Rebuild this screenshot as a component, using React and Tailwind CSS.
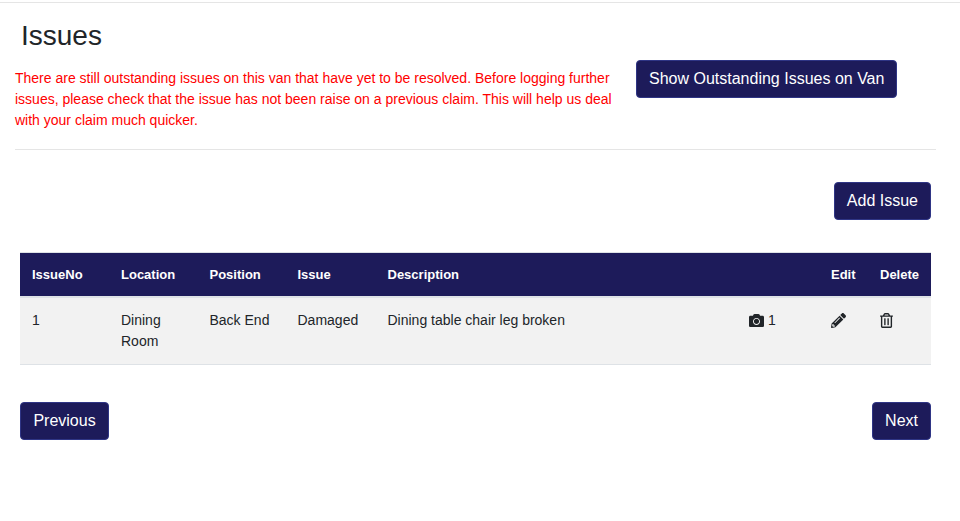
import { FaCamera, FaPencilAlt, FaRegTrashAlt } from 'react-icons/fa';

const NavButton = ({ children, className = '' }) => (
  <button className={`h-[38px] px-3 rounded border border-[#2f3585] bg-[#1d1b5a] text-white text-base leading-6 ${className}`}>
    {children}
  </button>
);

const headCell = 'px-3 pt-[3px] align-middle text-left text-[13px] font-bold';

const App = () => {
  return (
    <div className="min-h-[521px] bg-white text-[#212529] font-['Liberation_Sans',Arial,sans-serif]">
      <div className="h-[3px] border-b border-[#e5e5e5]" />

      <div className="px-[15px] w-[951px]">
        {/* Title + warning */}
        <h2 className="pl-[6px] pt-[16px] text-[28px] leading-[34px] font-normal">Issues</h2>

        <div className="flex items-start mt-[7px]">
          <p className="w-[621px] pt-[8px] text-sm leading-[21px] text-[#ff0000]">
            There are still outstanding issues on this van that have yet to be resolved. Before logging further
            issues, please check that the issue has not been raise on a previous claim. This will help us deal
            with your claim much quicker.
          </p>
          <NavButton>Show Outstanding Issues on Van</NavButton>
        </div>

        <hr className="mt-[18px] border-[#e5e5e5]" />

        <div className="flex justify-end mt-[32px] pr-[5px]">
          <NavButton>Add Issue</NavButton>
        </div>

        {/* Issues table */}
        <div className="mt-[32px] px-[5px]">
          <table className="w-[911px] table-fixed border-collapse text-sm">
            <colgroup>
              <col className="w-[89px]" />
              <col className="w-[88.5px]" />
              <col className="w-[88px]" />
              <col className="w-[90px]" />
              <col className="w-[361.5px]" />
              <col className="w-[82px]" />
              <col className="w-[49px]" />
              <col className="w-[63px]" />
            </colgroup>
            <thead>
              <tr className="h-[44px] bg-[#1d1b5a] text-white border-t border-b-2 border-t-[#dee2e6] border-b-[#dee2e6]">
                <th className={headCell}>IssueNo</th>
                <th className={headCell}>Location</th>
                <th className={headCell}>Position</th>
                <th className={headCell}>Issue</th>
                <th className={headCell}>Description</th>
                <th className={headCell}></th>
                <th className={headCell}>Edit</th>
                <th className={headCell}>Delete</th>
              </tr>
            </thead>
            <tbody>
              <tr className="bg-[#f2f2f2] border-b border-[#dee2e6] align-top leading-[21px]">
                <td className="p-3">1</td>
                <td className="p-3">Dining Room</td>
                <td className="p-3">Back End</td>
                <td className="p-3">Damaged</td>
                <td className="p-3">Dining table chair leg broken</td>
                <td className="p-3">
                  <span className="flex items-center gap-[4px]">
                    <FaCamera className="w-[15px] h-[15px]" /> 1
                  </span>
                </td>
                <td className="p-3">
                  <FaPencilAlt className="w-[15px] h-[15px] mt-[3px]" />
                </td>
                <td className="p-3">
                  <FaRegTrashAlt className="w-[13px] h-[15px] mt-[3px]" />
                </td>
              </tr>
            </tbody>
          </table>

          <div className="flex justify-between mt-[37px]">
            <NavButton className="w-[89px]">Previous</NavButton>
            <NavButton>Next</NavButton>
          </div>
        </div>
      </div>
    </div>
  );
};

export default App;
